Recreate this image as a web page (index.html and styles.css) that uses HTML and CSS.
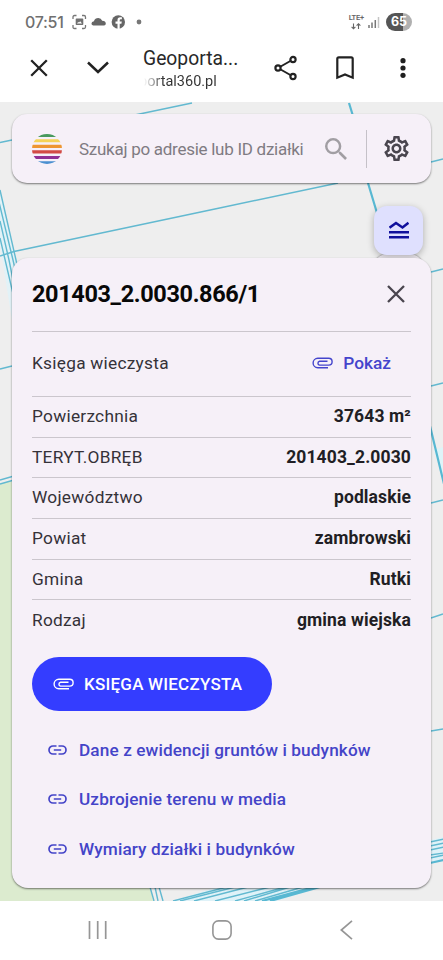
FILE: index.html
```html
<!DOCTYPE html>
<html lang="pl">
<head>
<meta charset="utf-8">
<meta name="viewport" content="width=device-width, initial-scale=1">
<title>Geoportal360.pl</title>
<link rel="stylesheet" href="styles.css">
</head>
<body>
<div class="phone">
  <header class="status">
    <span class="clock">07:51</span>
    <svg class="status-icons" width="74" height="16" viewBox="0 0 74 16">
      <path d="M1 5V3q0-1.500 1.500-1.500h2M10 1.500h2q1.500 0 1.500 1.500v2M13.500 11v2q0 1.500-1.500 1.500h-2M4.500 14.500h-2Q1 14.500 1 13v-2" fill="none" stroke="#777" stroke-width="1.300"/>
      <path d="M4.500 4.500h6q.8 0 .8.8v5q0 .8-.8.8h-6q-.8 0-.8-.8v-5q0-.8.800-.8zM5 9.500h5L8.200 7.200 7 8.500l-.8-.6z" fill="#707070" fill-rule="evenodd"/>
      <path d="M22.500 11.500q-3 0-3-2 0-2 2.400-2.300Q23 4 26.300 4q2.800 0 3.900 2.700 3.600.3 3.600 2.700 0 2.100-2.800 2.100z" fill="#666"/>
      <circle cx="46.300" cy="8" r="6.700" fill="#666"/>
      <path d="M45.500 15V9.700h-2V7.500h2V6q0-2.700 2.700-2.700h1.700v2h-1.200q-1 0-1 1v1.200h2.100l-.4 2.200h-1.700V15z" fill="#fff"/>
      <circle cx="67" cy="8" r="2.400" fill="#777"/>
    </svg>
    <div class="radio">
      <span class="lte">LTE+</span>
      <svg width="10" height="7" viewBox="0 0 10 7"><path d="M2.500.5v5M.6 3.800l1.900 1.900 1.900-1.900M7.500 6V1M5.600 2.600L7.500.8l1.900 1.800" fill="none" stroke="#666" stroke-width="1.100"/></svg>
    </div>
    <svg class="signal" width="12" height="12" viewBox="0 0 12 12"><path d="M1 9v3M4 6.500V12M7.300 4v8" stroke="#777" stroke-width="1.500"/><path d="M10.500 1v11" stroke="#c4c4c4" stroke-width="1.500"/></svg>
    <span class="battery">65</span>
  </header>

  <nav class="toolbar">
    <svg class="t-close" width="20" height="20" viewBox="0 0 20 20"><path d="M2.200 2.200l15.600 15.600M17.800 2.200L2.200 17.800" stroke="#222" stroke-width="2.300"/></svg>
    <svg class="t-down" width="24" height="16" viewBox="0 0 24 16"><path d="M2 2.500l10 9.500 10-9.500" fill="none" stroke="#222" stroke-width="2.500"/></svg>
    <div class="site"><span class="site-title">Geoporta...</span><span class="site-url">portal360.pl</span></div>
    <svg class="t-share" width="24" height="26" viewBox="0 0 24 26"><path d="M4 13l15-8.500M4 13l15 8.500" stroke="#222" stroke-width="2"/><g fill="#fff" stroke="#222" stroke-width="2.200"><circle cx="4" cy="13" r="2.600"/><circle cx="19" cy="4.500" r="2.600"/><circle cx="19" cy="21.500" r="2.600"/></g></svg>
    <svg class="t-mark" width="18" height="24" viewBox="0 0 18 24"><path d="M1.300 21.700V2.800Q1.300 1.300 2.800 1.300h12.400q1.500 0 1.500 1.500v18.900L9 18.400z" fill="none" stroke="#222" stroke-width="2.200"/></svg>
    <svg class="t-more" width="6" height="20" viewBox="0 0 6 20"><g fill="#1f1f1f"><circle cx="3" cy="2.700" r="2.600"/><circle cx="3" cy="10" r="2.600"/><circle cx="3" cy="17.300" r="2.600"/></g></svg>
  </nav>

  <main class="map">
    <svg class="tiles" viewBox="0 102 443 799" preserveAspectRatio="none">
      <path d="M0 484l14-4v300l136 105 3 16H0z" fill="#dcebcf"/>
      <path d="M0 190l16 70 14 60H12L0 245z" fill="#e2f2f7"/>
      <path d="M173 901l50-16h104l-50 16z" fill="#dff2f8"/>
      <path d="M431 840l12-3v23l-12 3z" fill="#dff2f8"/>
      <path d="M434 450l9-3v32z" fill="#def4f8"/>
      <g fill="none" stroke="#62b9d0" stroke-width="1.400">
        <path d="M0 142.500l12-2.500M130 116l62-13M0 256l14-4.500L222 207.500 338 183M431 162l12-3M0 369l12-3M0 480l14-4M0 484l14-4"/>
        <path d="M0 190l16 70 8 40M-1 202l14 58 9 40M0 221l9 39 6 30M0 238l14 60"/>
        <path d="M431 272l12-3M431 386l12-3M431 503l12-3M431 618l12-4M431 731l12-2"/>
        <path d="M150 887l4 14M155 887l3 14M159 887l4 14"/>
        <path d="M173 901l54-14M180 901l55-14M194 901l54-14M215 901l55-14M235 901l50-14M244 901l46-14M255 901l48-14"/>
        <path d="M430 842l14-3M430 846l14-3M430 850l14-3M430 855l14-2M430 858l14-3"/>
      </g>
      <g fill="none" stroke="#58b8d2" stroke-width="2.200">
        <path d="M349 103l4 13M368 183l9 30M430 426l14 58M262 901l52-14M270 901l50-14M430 863l14-3"/>
      </g>
    </svg>

    <div class="search">
      <svg class="logo" width="30" height="30" viewBox="0 0 30 30">
        <clipPath id="disc"><circle cx="15" cy="15" r="15"/></clipPath>
        <g clip-path="url(#disc)"><path fill="#48995d" d="M0 0h30v3H0z"/><path fill="#f5d358" d="M0 5.200h30v3H0z"/><path fill="#ee9632" d="M0 10.700h30v3.200H0z"/><path fill="#d24a45" d="M0 16.300h30v3.200H0z"/><path fill="#8f3095" d="M0 22h30v3H0z"/><path fill="#4a8fd0" d="M0 27.200h30V30H0z"/></g>
      </svg>
      <span class="placeholder">Szukaj po adresie lub ID działki</span>
      <svg class="glass" width="22" height="22" viewBox="3 3 17.500 17.500"><path fill="#a19ea3" d="M15.500 14h-.79l-.28-.27A6.471 6.471 0 0 0 16 9.500 6.500 6.500 0 1 0 9.500 16c1.610 0 3.090-.59 4.230-1.570l.27.28v.79l5 4.990L20.490 19l-4.990-5zm-6 0C7.010 14 5 11.990 5 9.500S7.010 5 9.500 5 14 7.010 14 9.500 11.990 14 9.500 14z"/></svg>
      <span class="rule"></span>
      <svg class="gear" width="25" height="25" viewBox="2 2 20 20"><path fill="#49454e" d="M19.430 12.980c.04-.32.070-.64.070-.98 0-.34-.03-.66-.07-.98l2.110-1.650c.19-.15.240-.42.120-.64l-2-3.460c-.09-.16-.26-.25-.44-.25-.06 0-.12.010-.17.030l-2.490 1c-.52-.4-1.080-.73-1.690-.98l-.38-2.650C14.460 2.180 14.250 2 14 2h-4c-.25 0-.46.180-.49.420l-.38 2.650c-.61.250-1.170.590-1.690.98l-2.490-1c-.06-.02-.12-.03-.18-.03-.17 0-.34.090-.43.250l-2 3.460c-.13.220-.07.490.12.640l2.110 1.650c-.04.320-.07.650-.07.980s.030.660.070.980l-2.110 1.650c-.19.150-.24.420-.12.640l2 3.460c.09.160.260.250.440.250.06 0 .12-.01.170-.03l2.490-1c.52.400 1.080.730 1.690.980l.38 2.650c.03.240.24.420.49.420h4c.25 0 .46-.18.49-.42l.38-2.650c.61-.25 1.170-.59 1.690-.98l2.490 1c.06.020.12.030.18.030.17 0 .34-.09.430-.25l2-3.460c.12-.22.070-.49-.12-.64l-2.110-1.650zm-1.980-1.710c.04.310.050.520.050.730 0 .21-.02.430-.05.730l-.14 1.130.89.700 1.080.840-.7 1.210-1.270-.51-1.040-.42-.9.680c-.43.320-.84.560-1.250.730l-1.060.430-.16 1.130-.2 1.350h-1.400l-.19-1.350-.16-1.130-1.060-.43c-.43-.18-.83-.41-1.230-.71l-.91-.7-1.060.430-1.270.510-.7-1.210 1.080-.84.890-.7-.14-1.130c-.03-.31-.05-.54-.05-.74s.020-.43.050-.73l.14-1.130-.89-.7-1.080-.84.700-1.210 1.270.510 1.040.420.900-.68c.43-.32.840-.56 1.250-.73l1.060-.43.160-1.130.2-1.350h1.390l.19 1.350.16 1.130 1.060.43c.43.180.830.410 1.230.710l.91.700 1.060-.43 1.270-.51.700 1.210-1.070.850-.89.700.14 1.130zM12 8c-2.210 0-4 1.790-4 4s1.790 4 4 4 4-1.790 4-4-1.790-4-4-4zm0 6c-1.100 0-2-.9-2-2s.9-2 2-2 2 .9 2 2-.9 2-2 2z"/></svg>
    </div>

    <div class="fab fab-under"></div>
    <div class="fab">
      <svg width="20" height="18" viewBox="0 0 20 18"><path d="M.5 6.800l6.500-4.800 6.500 4.500 6-4.700M0 11.300h20M0 16.300h20" fill="none" stroke="#10109c" stroke-width="2.500"/></svg>
    </div>

    <section class="card">
      <div class="card-head">
        <h1>201403_2.0030.866/1</h1>
        <svg width="18" height="18" viewBox="0 0 18 18"><path d="M1 1l16 16M17 1L1 17" stroke="#49454e" stroke-width="2.300"/></svg>
      </div>
      <div class="row row-book">
        <span class="label">Księga wieczysta</span>
        <a class="show"><svg class="clip" width="21" height="12" viewBox="0 0 21 12"><use href="#clip"/></svg>Pokaż</a>
      </div>
      <div class="row"><span class="label">Powierzchnia</span><b>37643 m²</b></div>
      <div class="row"><span class="label">TERYT.OBRĘB</span><b>201403_2.0030</b></div>
      <div class="row"><span class="label">Województwo</span><b>podlaskie</b></div>
      <div class="row"><span class="label">Powiat</span><b>zambrowski</b></div>
      <div class="row"><span class="label">Gmina</span><b>Rutki</b></div>
      <div class="row"><span class="label">Rodzaj</span><b>gmina wiejska</b></div>
      <button class="primary"><svg class="clip" width="21" height="12" viewBox="0 0 21 12"><path id="clip" d="M16 10.700H5.800A4.700 4.700 0 0 1 5.800 1.300H16.700A3.400 3.400 0 0 1 16.700 8.100H7.500A2 2 0 0 1 7.500 4.200H15.500" fill="none" stroke="currentColor" stroke-width="1.400"/></svg><span>KSIĘGA WIECZYSTA</span></button>
      <div class="links">
        <a><svg width="19" height="10" viewBox="0 0 19 10"><path id="chain" d="M8.500 1H5a4 4 0 0 0 0 8h3.500M10.500 1H14a4 4 0 0 1 0 8h-3.500M5.800 5h7.400" fill="none" stroke="currentColor" stroke-width="1.700"/></svg><span>Dane z ewidencji gruntów i budynków</span></a>
        <a><svg width="19" height="10" viewBox="0 0 19 10"><use href="#chain"/></svg><span>Uzbrojenie terenu w media</span></a>
        <a><svg width="19" height="10" viewBox="0 0 19 10"><use href="#chain"/></svg><span>Wymiary działki i budynków</span></a>
      </div>
    </section>
  </main>

  <footer class="navbar">
    <svg width="20" height="20" viewBox="0 0 20 20"><path d="M1.500 1v18M9.700 1v18M17.700 1v18" stroke="#969696" stroke-width="1.700"/></svg>
    <svg class="home" width="20" height="20" viewBox="0 0 20 20"><rect x=".9" y=".9" width="18.200" height="18.200" rx="5.500" fill="none" stroke="#969696" stroke-width="1.600"/></svg>
    <svg width="13" height="20" viewBox="0 0 13 20"><path d="M12 .8L1.300 10 12 19.200" fill="none" stroke="#969696" stroke-width="1.700"/></svg>
  </footer>
</div>
</body>
</html>
```
FILE: styles.css
```css
* { box-sizing: border-box; }
body { margin: 0; background: #fff; font-family: Roboto, sans-serif; }
svg { display: block; flex: none; }
.phone { width: 443px; height: 960px; display: flex; flex-direction: column; overflow: hidden; }

.status { height: 42px; flex: none; display: flex; align-items: center; padding: 1px 31px 0 25px; color: #666; }
.clock { width: 47px; font: 500 16px/20px Inter, sans-serif; letter-spacing: -0.3px; color: #707070; white-space: nowrap; }
.radio { margin-left: auto; display: flex; flex-direction: column; align-items: center; gap: 1px; }
.lte { font: 600 7.500px/8px Roboto, sans-serif; letter-spacing: -.2px; }
.signal { margin: 0 6px 0 4px; }
.battery { width: 26px; height: 18px; border-radius: 9px; background: linear-gradient(90deg, #555 65%, #b0b0b0 65%); color: #fff; font: 700 12.500px/18px Inter, sans-serif; text-align: center; }

.toolbar { height: 60px; flex: none; display: flex; align-items: center; padding: 0 37px 8px 29px; }
.t-down { margin-left: 37px; }
.site { width: 110px; margin-left: 33px; padding-top: 3px; display: flex; flex-direction: column; color: #282828; white-space: nowrap; }
.site-title { font-size: 19.300px; line-height: 25px; }
.site-url { font-size: 14.500px; line-height: 22px; margin-left: -4px; background: linear-gradient(90deg, #fff 5px, #333 24px); -webkit-background-clip: text; background-clip: text; color: transparent; }
.t-share { margin-left: 21px; }
.t-mark { margin-left: 38px; }
.t-more { margin-left: auto; }

.map { position: relative; height: 799px; flex: none; padding: 12px 12px 0; background: #eee; overflow: hidden; }
.tiles { position: absolute; inset: 0; width: 100%; height: 100%; }

.search { position: relative; height: 69px; display: flex; align-items: center; padding: 0 22px 0 20px; border-radius: 15px; background: #f6f0f8; box-shadow: 0 1px 2px rgba(0,0,0,.5); }
.placeholder { width: 226px; margin-left: 17px; font-size: 17px; letter-spacing: -.27px; color: #7f7b82; white-space: nowrap; }
.glass { margin-left: 20px; }
.rule { width: 1px; height: 38px; margin-left: 19px; background: #c5c1c8; }
.gear { margin-left: auto; }

.fab { position: absolute; left: 374px; top: 104px; width: 49px; height: 49px; padding-bottom: 2px; border-radius: 13px; background: #dfe0fe; display: flex; align-items: center; justify-content: center; box-shadow: 0 2px 7px rgba(0,0,0,.28); }
.fab-under { top: 152px; background: #f1edf3; box-shadow: 0 0 2px rgba(0,0,0,.5); }

.card { position: relative; margin-top: 75px; height: 630px; padding: 0 20px; border-radius: 16px; background: #f6f0f8; box-shadow: 0 1px 2px rgba(0,0,0,.5); }
.card-head { height: 72.500px; display: flex; align-items: center; justify-content: space-between; padding-right: 6px; }
h1 { margin: 0; font-size: 23.500px; line-height: 30px; font-weight: 700; letter-spacing: -.38px; color: #080808; }
.row { height: 40.700px; padding-bottom: 1.500px; border-top: 1.500px solid #cbc6cd; display: flex; align-items: center; justify-content: space-between; font-size: 17.300px; letter-spacing: .26px; color: #353238; white-space: nowrap; }
.row-book { height: 65.500px; }
.row b { font-size: 17.500px; letter-spacing: .12px; color: #211e24; }
.show { display: flex; align-items: center; gap: 10px; margin-right: 20px; color: #4444cc; font-size: 17.300px; letter-spacing: 0; font-weight: 500; }
.primary { width: 240px; height: 54px; margin: 16.500px 0 0; padding: 0 0 0 21px; border: 0; border-radius: 27px; background: #343dff; color: #fff; display: flex; align-items: center; gap: 10px; font: 500 17px/24px Roboto, sans-serif; letter-spacing: .22px; white-space: nowrap; }
.links { margin-top: 15px; padding-left: 16px; }
.links a { height: 49.200px; display: flex; align-items: center; gap: 12px; color: #4444c8; font-size: 17.200px; letter-spacing: .12px; font-weight: 500; white-space: nowrap; }

.navbar { height: 59px; flex: none; display: flex; justify-content: space-between; align-items: center; padding: 0 90px 2px 88px; }
.home { margin-right: 4px; }
```
